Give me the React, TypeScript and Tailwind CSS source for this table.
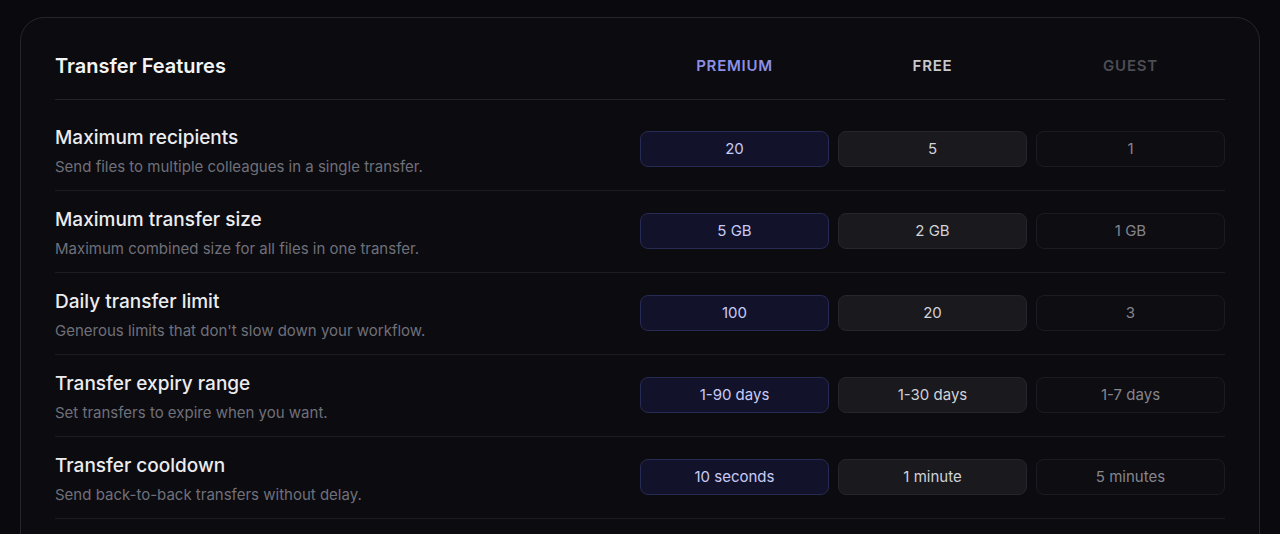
import React from 'react';

interface Feature {
  title: string;
  description: string;
  premium: string;
  free: string;
  guest: string;
}

const features: Feature[] = [
  {
    title: "Maximum recipients",
    description: "Send files to multiple colleagues in a single transfer.",
    premium: "20",
    free: "5",
    guest: "1",
  },
  {
    title: "Maximum transfer size",
    description: "Maximum combined size for all files in one transfer.",
    premium: "5 GB",
    free: "2 GB",
    guest: "1 GB",
  },
  {
    title: "Daily transfer limit",
    description: "Generous limits that don't slow down your workflow.",
    premium: "100",
    free: "20",
    guest: "3",
  },
  {
    title: "Transfer expiry range",
    description: "Set transfers to expire when you want.",
    premium: "1-90 days",
    free: "1-30 days",
    guest: "1-7 days",
  },
  {
    title: "Transfer cooldown",
    description: "Send back-to-back transfers without delay.",
    premium: "10 seconds",
    free: "1 minute",
    guest: "5 minutes",
  },
];

const cellBase = "h-9 mb-[2px] rounded-lg border flex items-center justify-center text-[15px] leading-5 pt-[1px]";
const headLabel = "text-center text-[15px] font-semibold tracking-wider";

const App = () => {
  return (
    <div className="min-h-[534px] bg-[#0a0a0e] px-5 pt-[17px] overflow-hidden" style={{ fontFamily: 'Inter, "Noto Sans", sans-serif' }}>
      <section className="rounded-3xl border border-[#25252b] bg-[#0b0b10] px-[34px] pt-[34px] pb-10">
        {/* Header */}
        <div className="grid grid-cols-[1fr_189px_189px_189px] gap-x-[9px] items-center border-b border-[#232328] pb-[19px]">
          <h2 className="text-xl leading-7 font-semibold text-[#f4f4f5]">Transfer Features</h2>
          <div className={`${headLabel} text-[#8d90e6]`}>PREMIUM</div>
          <div className={`${headLabel} text-[#c9c9ce]`}>FREE</div>
          <div className={`${headLabel} text-[#4d4d54]`}>GUEST</div>
        </div>

        {/* Rows */}
        <div className="pt-[9px]">
          {features.map((f, i) => (
            <div
              key={i}
              className="grid grid-cols-[1fr_189px_189px_189px] gap-x-[9px] items-center h-[82px] border-b border-[#1c1c21]"
            >
              <div className="pt-[2px]">
                <h3 className="text-[19px] leading-7 font-medium text-[#ececef]">{f.title}</h3>
                <p className="mt-[5px] text-[15px] leading-5 text-[#70707a]">{f.description}</p>
              </div>
              <div className={`${cellBase} bg-[#12132a] border-[#272a52] text-[#c9cbf7]`}>{f.premium}</div>
              <div className={`${cellBase} bg-[#19191e] border-[#25252b] text-[#d2d2d7]`}>{f.free}</div>
              <div className={`${cellBase} bg-[#0d0d12] border-[#1b1b21] text-[#85858d]`}>{f.guest}</div>
            </div>
          ))}
        </div>
      </section>
    </div>
  );
};

export default App;
